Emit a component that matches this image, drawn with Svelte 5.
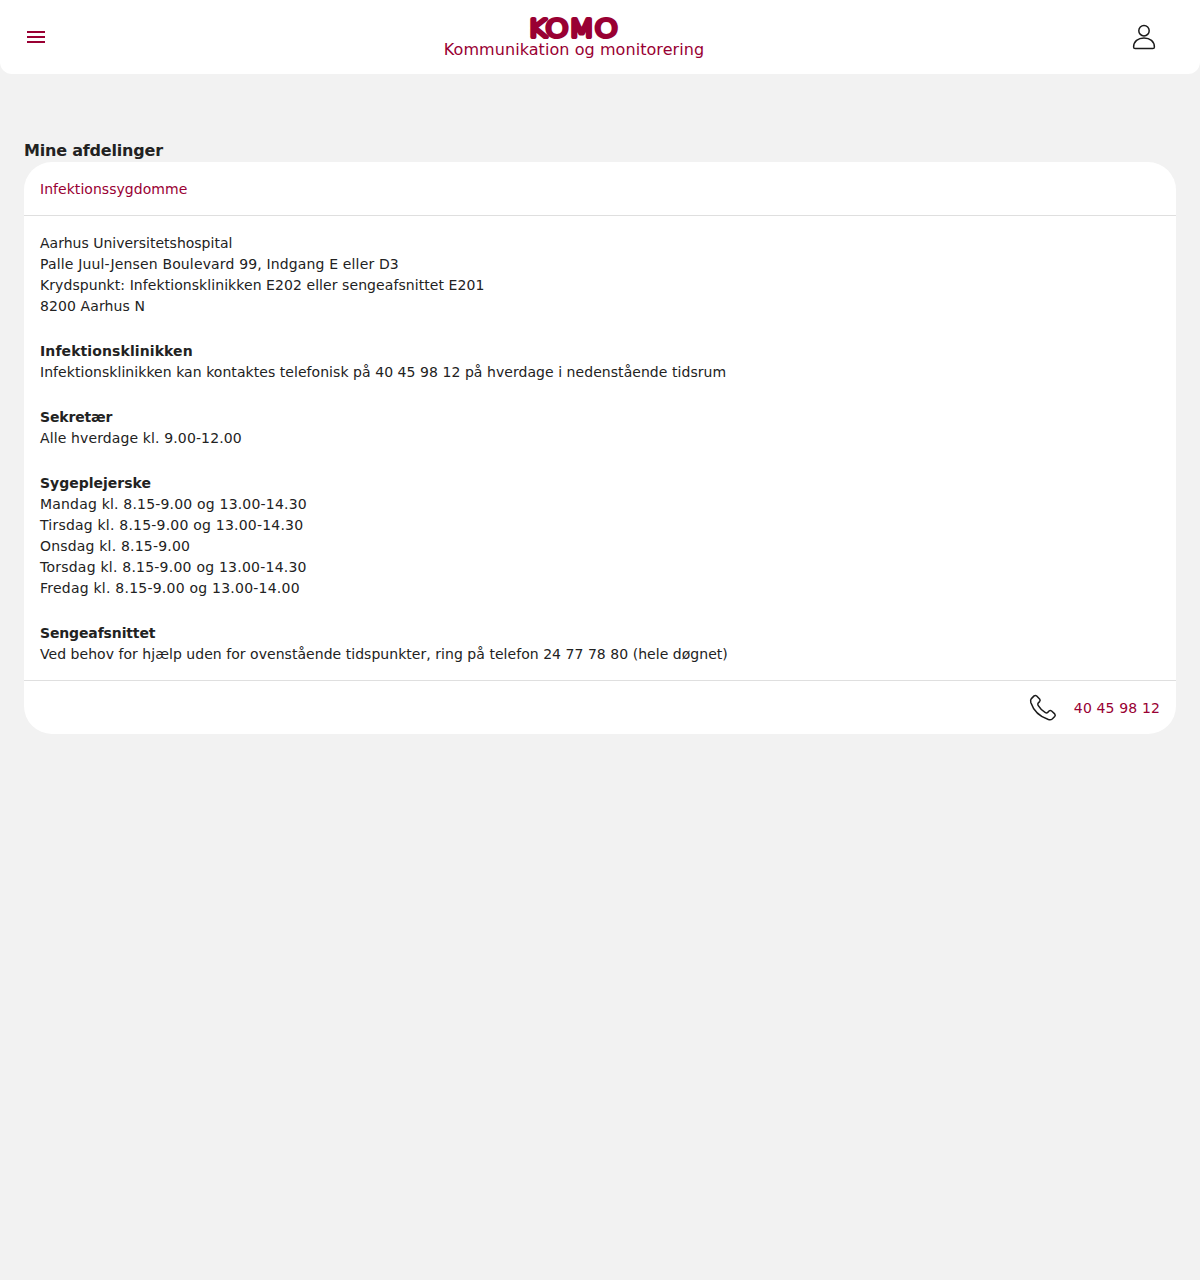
<script>
  // Each row is [text, letter-spacing in px].
  const sections = [
    { lines: [
      ['Aarhus Universitetshospital', 0],
      ['Palle Juul-Jensen Boulevard 99, Indgang E eller D3', 0.15],
      ['Krydspunkt: Infektionsklinikken E202 eller sengeafsnittet E201', 0.07],
      ['8200 Aarhus N', 0.1]
    ] },
    { title: ['Infektionsklinikken', 0.1], lines: [
      ['Infektionsklinikken kan kontaktes telefonisk på 40 45 98 12 på hverdage i nedenstående tidsrum', 0.055]
    ] },
    { title: ['Sekretær', -0.15], lines: [['Alle hverdage kl. 9.00-12.00', 0.125]] },
    { title: ['Sygeplejerske', 0], lines: [
      ['Mandag kl. 8.15-9.00 og 13.00-14.30', 0.19],
      ['Tirsdag kl. 8.15-9.00 og 13.00-14.30', 0.21],
      ['Onsdag kl. 8.15-9.00', 0.19],
      ['Torsdag kl. 8.15-9.00 og 13.00-14.30', 0.23],
      ['Fredag kl. 8.15-9.00 og 13.00-14.00', 0.23]
    ] },
    { title: ['Sengeafsnittet', -0.14], lines: [
      ['Ved behov for hjælp uden for ovenstående tidspunkter, ring på telefon 24 77 78 80 (hele døgnet)', 0.04]
    ] }
  ];
</script>

<header>
  <button class="menu" aria-label="Menu"><i></i><i></i><i></i></button>
  <div class="brand">
    <svg class="logo" width="90" height="26" viewBox="0 0 90 26">
      <text x="-1.6" y="23.3" textLength="90.5" lengthAdjust="spacingAndGlyphs">KOMO</text>
    </svg>
    <span class="tagline">Kommunikation og monitorering</span>
  </div>
  <svg class="user" width="24" height="26" viewBox="0 0 24 26">
    <circle cx="12" cy="6.7" r="5.2" />
    <path d="M3.2 24.6Q1.6 24.6 1.6 23C1.6 17.4 6 13.9 12 13.9S22.4 17.4 22.4 23Q22.4 24.6 20.8 24.6Z" />
  </svg>
</header>

<main>
  <h1>Mine afdelinger</h1>
  <article>
    <div class="head">Infektionssygdomme</div>
    <div class="body">
      {#each sections as { title, lines }}
        <section>
          {#if title}<h2 style:letter-spacing="{title[1]}px">{title[0]}</h2>{/if}
          {#each lines as [text, tracking]}<p style:letter-spacing="{tracking}px">{text}</p>{/each}
        </section>
      {/each}
    </div>
    <div class="foot">
      <svg width="28" height="28" viewBox="0 0 28 28">
        <path d="M2.4 4.6L5.1 1.9Q6.4 .9 7.7 2L10.6 5.1Q11.7 6.4 10.6 7.6L9.2 9Q8.4 10.1 9.1 11.3Q11.8 15.8 16.4 18.6Q17.7 19.4 18.7 18.4L20 17Q21.3 16 22.6 17L25.7 19.9Q26.8 21.2 25.7 22.5L23.2 25Q21.7 26.2 19.4 25.5C10.6 22.5 4.4 16.2 1.8 8.4Q1.2 6 2.4 4.6Z" />
      </svg>
      <a href="tel:40459812">40 45 98 12</a>
    </div>
  </article>
</main>

<style>
  :global(body) { margin: 0; background: #f2f2f2; }
  :global(#app) { font: 14px/21px Verdana, "DejaVu Sans", sans-serif; color: #222; }
  header {
    height: 74px; box-sizing: border-box; padding: 0 44px 0 24px;
    display: flex; align-items: center; justify-content: space-between;
    background: #fff; border-radius: 0 0 12px 12px;
  }
  .menu {
    width: 24px; height: 24px; padding: 0 3px; border: 0; background: none;
    display: flex; flex-direction: column; justify-content: center; gap: 3px;
  }
  .menu i { height: 2px; background: #990033; }
  .brand {
    display: flex; flex-direction: column; align-items: center;
    height: 46px; margin-right: 32px; color: #990033;
  }
  .logo { flex: none; }
  .logo text {
    font: 200 25.5px "DejaVu Sans Light", "DejaVu Sans", sans-serif; fill: #990033;
    stroke: #990033; stroke-width: 4; stroke-linejoin: round;
  }
  .tagline { font-size: 16px; line-height: 20px; letter-spacing: 0.07px; white-space: nowrap; }
  svg { overflow: visible; }
  .user, .foot svg { fill: none; stroke: #1b1b1b; stroke-width: 1.5; stroke-linejoin: round; }
  main { padding: 64px 24px; }
  h1 { margin: 0; padding-top: 1px; font-size: 16px; line-height: 23px; letter-spacing: -0.2px; }
  article { background: #fff; border-radius: 28px; }
  .head { padding: 17px 16px 15px; color: #990033; letter-spacing: 0.04px; border-bottom: 1px solid #dfdfdf; }
  .body { padding: 17px 16px 15px; display: flex; flex-direction: column; gap: 24px; }
  h2, p { margin: 0; font-size: 14px; line-height: 21px; white-space: nowrap; }
  .foot {
    height: 53px; padding: 0 16px; border-top: 1px solid #dfdfdf;
    display: flex; justify-content: flex-end; align-items: center; gap: 17px;
  }
  .foot a { padding-top: 2px; color: #990033; letter-spacing: 0.14px; text-decoration: none; }
</style>
